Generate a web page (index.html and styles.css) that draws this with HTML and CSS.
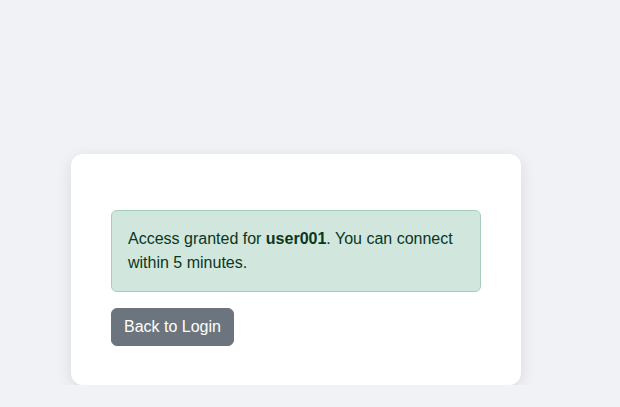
FILE: index.html
```html
<!DOCTYPE html>
<html>
<head>
<meta charset="utf-8">
<link rel="stylesheet" href="styles.css">
</head>
<body>
<div class="page">
  <div class="card">
    <div class="alert">Access granted for <strong>user001</strong>. You can connect within 5 minutes.</div>
    <button class="btn">Back to Login</button>
  </div>
</div>
</body>
</html>
```
FILE: styles.css
```css
html, body {
  margin: 0;
  padding: 0;
  background: #f0f2f5;
  font-family: "Liberation Sans", Arial, sans-serif;
  font-size: 16px;
  line-height: 1.5;
}
.page {
  padding: 154px 0 0 71px;
}
.card {
  width: 450px;
  box-sizing: border-box;
  background: #fff;
  border-radius: 12px;
  box-shadow: 0 4px 16px rgba(0, 0, 0, 0.1);
  padding: 56px 40px 39px 40px;
}
.alert {
  background: #d1e7dd;
  border: 1px solid #a3cfbb;
  color: #0a3622;
  border-radius: 6px;
  padding: 16px;
  margin-bottom: 16px;
}
.alert strong {
  font-weight: bold;
}
.btn {
  display: inline-block;
  background: #6c757d;
  color: #fff;
  border: 1px solid #6c757d;
  border-radius: 6px;
  padding: 6px 12px;
  font-family: inherit;
  font-size: 16px;
  line-height: 1.5;
  margin: 0;
}
```
